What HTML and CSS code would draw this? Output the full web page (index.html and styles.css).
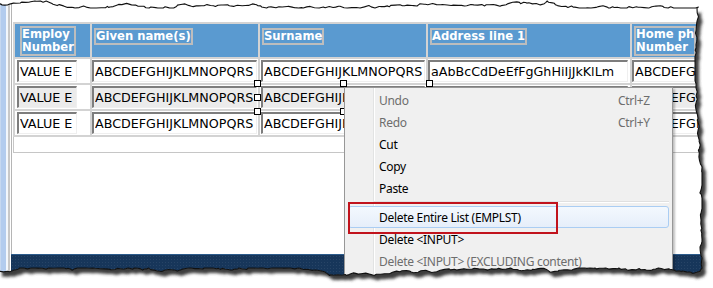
FILE: index.html
```html
<!DOCTYPE html>
<html lang="en">
<head>
    <meta charset="UTF-8">
    <title>Employee List - Designer</title>
    <link rel="stylesheet" href="styles.css">
</head>
<body>

<div class="screen">
    <div class="side-strip"></div>

    <div class="page">
        <div class="canvas">
            <div class="grid-box">
                <table class="grid">
                    <colgroup>
                        <col class="c-num">
                        <col class="c-given">
                        <col class="c-surname">
                        <col class="c-address">
                        <col class="c-phone">
                    </colgroup>
                    <tr class="head">
                        <th><span class="label">Employ<br>Number</span></th>
                        <th><span class="label">Given name(s)</span></th>
                        <th><span class="label">Surname</span></th>
                        <th><span class="label">Address line 1</span></th>
                        <th><span class="label">Home ph<br>Number</span></th>
                    </tr>
                    <tr>
                        <td><input class="in-num" type="text" value="VALUE E"></td>
                        <td><input class="in-given" type="text" value="ABCDEFGHIJKLMNOPQRS"></td>
                        <td><input class="in-surname" type="text" value="ABCDEFGHIJKLMNOPQRS"></td>
                        <td><input class="in-address" type="text" value="aAbBcCdDeEfFgGhHiIjJkKlLm"></td>
                        <td><input class="in-phone" type="text" value="ABCDEFGHIJKLMNOPQRS"></td>
                    </tr>
                    <tr class="current">
                        <td><input class="in-num" type="text" value="VALUE E"></td>
                        <td><input class="in-given" type="text" value="ABCDEFGHIJKLMNOPQRS"></td>
                        <td class="selected">
                            <input class="in-surname" type="text" value="ABCDEFGHIJKLMNOPQRS">
                            <span class="handle h-tl"></span>
                            <span class="handle h-tm"></span>
                            <span class="handle h-tr"></span>
                            <span class="handle h-ml"></span>
                            <span class="handle h-mr"></span>
                            <span class="handle h-bl"></span>
                            <span class="handle h-bm"></span>
                            <span class="handle h-br"></span>
                        </td>
                        <td><input class="in-address" type="text" value="aAbBcCdDeEfFgGhHiIjJkKlLm"></td>
                        <td><input class="in-phone" type="text" value="ABCDEFGHIJKLMNOPQRS"></td>
                    </tr>
                    <tr>
                        <td><input class="in-num" type="text" value="VALUE E"></td>
                        <td><input class="in-given" type="text" value="ABCDEFGHIJKLMNOPQRS"></td>
                        <td><input class="in-surname" type="text" value="ABCDEFGHIJKLMNOPQRS"></td>
                        <td><input class="in-address" type="text" value="aAbBcCdDeEfFgGhHiIjJkKlLm"></td>
                        <td><input class="in-phone" type="text" value="ABCDEFGHIJKLMNOPQRS"></td>
                    </tr>
                </table>
            </div>
        </div>
        <div class="band"></div>
    </div>

    <div class="context-menu">
        <div class="menu-item disabled"><span>Undo</span><span>Ctrl+Z</span></div>
        <div class="menu-item disabled"><span>Redo</span><span>Ctrl+Y</span></div>
        <div class="menu-item"><span>Cut</span></div>
        <div class="menu-item"><span>Copy</span></div>
        <div class="menu-item"><span>Paste</span></div>
        <div class="menu-sep"></div>
        <div class="menu-item hover"><span>Delete Entire List (EMPLST)</span></div>
        <div class="menu-item"><span>Delete &lt;INPUT&gt;</span></div>
        <div class="menu-item disabled"><span>Delete &lt;INPUT&gt; (EXCLUDING content)</span></div>
    </div>

    <div class="callout"></div>

    <svg class="torn" width="713" height="288" viewBox="0 0 713 288">
        <defs>
            <clipPath id="outside">
                <path id="outsideClip" clip-rule="evenodd" d=""/>
            </clipPath>
            <filter id="soft" x="-5%" y="-5%" width="110%" height="110%">
                <feGaussianBlur stdDeviation="1.6"/>
            </filter>
        </defs>
        <path id="paperOut" fill="#fff" fill-rule="evenodd" d=""/>
        <g clip-path="url(#outside)">
            <path id="paperShadow" fill="#3c3c3c" transform="translate(4 5)" filter="url(#soft)" d=""/>
        </g>
        <path id="paperEdge" fill="none" stroke="#111" stroke-width="1.1" stroke-linejoin="round" d=""/>
    </svg>
</div>

<script>
    // torn paper edge round the capture
    var seed = 11;
    function rnd() {
        seed = (seed * 16807) % 2147483647;
        return seed / 2147483647;
    }

    var pts = [];
    var y = 6;
    for (var x = -2; x < 699; x += 1 + rnd() * 4) {
        y += (rnd() - 0.5) * 3;
        y = Math.max(1, Math.min(8, y));
        pts.push([x, y]);
    }
    var rx = 699;
    for (var ry = 7; ry < 271; ry += 1 + rnd() * 4) {
        rx += (rnd() - 0.5) * 3;
        rx = Math.max(695, Math.min(702, rx));
        pts.push([rx, ry]);
    }
    var by = 271;
    for (var bx = 700; bx > -2; bx -= 1 + rnd() * 4) {
        by += (rnd() - 0.5) * 3;
        by = Math.max(268, Math.min(277, by));
        pts.push([bx, by]);
    }
    pts.push([-2, 272]);

    var outline = 'M' + pts.map(function (p) {
        return p[0].toFixed(1) + ' ' + p[1].toFixed(1);
    }).join('L') + 'Z';
    var frame = 'M-20 -20H740V310H-20Z';

    document.getElementById('paperOut').setAttribute('d', frame + outline);
    document.getElementById('outsideClip').setAttribute('d', frame + outline);
    document.getElementById('paperShadow').setAttribute('d', outline);
    document.getElementById('paperEdge').setAttribute('d', outline);
</script>

</body>
</html>
```

FILE: styles.css
```css
body {
    margin: 0;
    background: #fff;
}

.screen {
    position: relative;
    display: flex;
    width: 713px;
    height: 288px;
    overflow: hidden;
    background: #fff;
}

.side-strip {
    flex-shrink: 0;
    width: 11px;
    background: linear-gradient(to right,
        #c6d8f0 0 1px,
        #b3ccee 1px 6px,
        #f3f7fc 6px 8px,
        #c8c8c8 8px 10px,
        #fff 10px 11px);
}

.page {
    flex: 1;
    display: flex;
    flex-direction: column;
    min-width: 0;
}

.canvas {
    flex: 1;
    min-height: 0;
    border-left: 1px solid #b5b5b5;
    padding: 22px 0 0 1px;
    overflow: hidden;
    background: #fff;
}

.grid-box {
    width: 800px;
    height: 129px;
    border: 1px solid #c6c6c6;
}

.grid {
    margin: -1px 0 0 -1px;
    table-layout: fixed;
    width: 771px;
    border-spacing: 2px;
    background: #d3d3d3;
}

.c-num { width: 75px; }
.c-given { width: 166px; }
.c-surname { width: 166px; }
.c-address { width: 202px; }
.c-phone { width: 150px; }

.grid .head {
    height: 33px;
}

.grid th {
    padding: 2px 0 0 2px;
    text-align: left;
    vertical-align: top;
    background: #5a9ad0;
}

.grid th:first-child {
    padding-left: 5px;
}

.label {
    display: inline-block;
    border: 2px solid #bdbdbd;
    font-family: "DejaVu Sans", sans-serif;
    font-weight: bold;
    font-size: 11.6px;
    line-height: 13px;
    color: #fff;
    white-space: nowrap;
}

.grid td {
    padding: 1px 0;
    background: #fff;
}

.grid td:first-child {
    padding-left: 2px;
}

.grid td:nth-child(3) {
    padding-left: 1px;
}

.grid input {
    display: block;
    box-sizing: border-box;
    height: 22px;
    margin: 0;
    padding: 0 1px;
    border-style: solid;
    border-width: 2px 1px 1px 2px;
    border-color: #7d7d7d #efefef #efefef #7d7d7d;
    background: #fff;
    font-family: "DejaVu Sans", sans-serif;
    font-size: 12.7px;
    color: #000;
    outline: none;
}

.in-num { width: 60px; }
.in-given { width: 165px; }
.in-surname { width: 164px; }
.in-address { width: 200px; }
.in-phone { width: 148px; }

.current input {
    background: #ebebeb;
}

.selected {
    position: relative;
}

.handle {
    position: absolute;
    width: 5px;
    height: 5px;
    border: 1px solid #000;
    background: #fff;
}

.h-tl { left: -6px; top: -5px; }
.h-tm { left: 80px; top: -5px; }
.h-tr { left: 166px; top: -5px; }
.h-ml { left: -6px; top: 9px; }
.h-mr { left: 166px; top: 9px; }
.h-bl { left: -6px; top: 23px; }
.h-bm { left: 80px; top: 23px; }
.h-br { left: 166px; top: 23px; }

.band {
    flex-shrink: 0;
    height: 33px;
    border-top: 1px solid #2d5c8c;
    background-color: #17365a;
    background-image: radial-gradient(rgba(255, 255, 255, 0.07) 1px, transparent 1px);
    background-size: 3px 3px;
}

.context-menu {
    position: absolute;
    left: 344px;
    top: 87px;
    width: 327px;
    height: 200px;
    padding-top: 1px;
    border: 1px solid #979797;
    background: linear-gradient(to right, transparent 28px, #e2e3e3 28px 29px, #fff 29px 30px, transparent 30px), #f0f0f0;
    box-shadow: 2px 2px 2px rgba(0, 0, 0, 0.25);
    font-family: "Noto Sans", sans-serif;
    font-size: 12px;
    letter-spacing: -0.3px;
}

.menu-item {
    display: grid;
    grid-template-columns: 239px 1fr;
    height: 20px;
    line-height: 21px;
    margin: 0 3px;
    padding-left: 30px;
    border: 1px solid transparent;
    border-radius: 3px;
    color: #000;
    white-space: nowrap;
}

.menu-item.disabled {
    color: #6d6d6d;
}

.menu-item.hover {
    border-color: #aacdf3;
    background: linear-gradient(#f3f8fe, #e6eefa);
}

.menu-sep {
    height: 1px;
    margin: 2px 3px 3px 29px;
    border-bottom: 1px solid #fff;
    background: #e0e0e0;
}

.callout {
    position: absolute;
    left: 348px;
    top: 202px;
    box-sizing: border-box;
    width: 210px;
    height: 32px;
    border: 2px solid #c1131c;
}

.torn {
    position: absolute;
    left: 0;
    top: 0;
    pointer-events: none;
}
```
